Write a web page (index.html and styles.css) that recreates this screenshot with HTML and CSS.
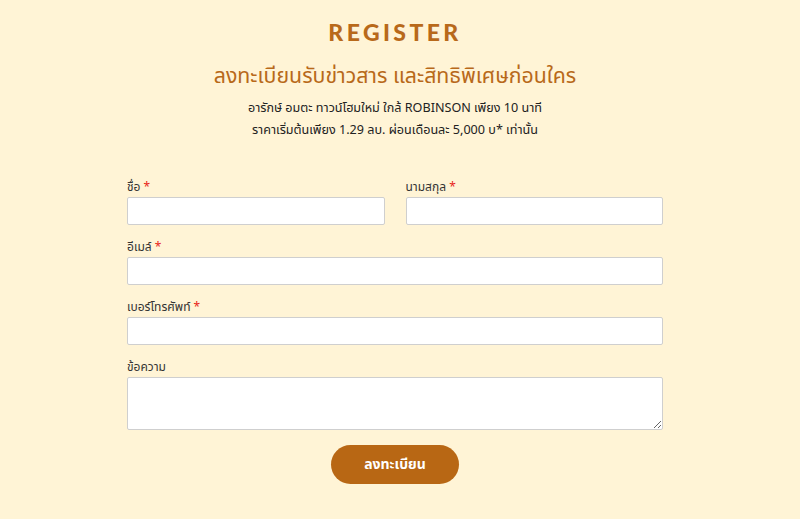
FILE: index.html
```html
<!DOCTYPE html>
<html lang="th">
<head>
<meta charset="utf-8">
<title>Register</title>
<link rel="stylesheet" href="styles.css">
</head>
<body>
<main class="page">
  <h1 class="title">REGISTER</h1>
  <h2 class="subtitle">ลงทะเบียนรับข่าวสาร และสิทธิพิเศษก่อนใคร</h2>
  <p class="desc">อารักษ์ อมตะ ทาวน์โฮมใหม่ ใกล้ ROBINSON เพียง 10 นาที<br>ราคาเริ่มต้นเพียง 1.29 ลบ. ผ่อนเดือนละ 5,000 บ* เท่านั้น</p>
  <form class="form">
    <div class="row two">
      <label class="field"><span class="lbl">ชื่อ <em>*</em></span><input type="text" class="inp"></label>
      <label class="field"><span class="lbl">นามสกุล <em>*</em></span><input type="text" class="inp"></label>
    </div>
    <label class="field"><span class="lbl">อีเมล์ <em>*</em></span><input type="email" class="inp"></label>
    <label class="field"><span class="lbl">เบอร์โทรศัพท์ <em>*</em></span><input type="tel" class="inp"></label>
    <label class="field"><span class="lbl">ข้อความ</span><textarea class="inp area"></textarea></label>
    <div class="actions"><button type="button" class="btn">ลงทะเบียน</button></div>
  </form>
</main>
</body>
</html>
```
FILE: styles.css
```css
html, body { margin: 0; padding: 0; }
body {
  background: #fff4d6;
  font-family: "Noto Sans", "Noto Sans Thai", "Open Sans", sans-serif;
  color: #222;
  width: 800px;
  height: 519px;
  overflow: hidden;
}
.page {
  display: flex;
  flex-direction: column;
  align-items: center;
  padding-top: 17px;
  padding-right: 10px;
}
.title {
  margin: 0;
  font-family: "Lato", "Open Sans", sans-serif;
  font-weight: 900;
  font-size: 23px;
  letter-spacing: 3.4px;
  line-height: 30px;
  color: #b8691a;
}
.subtitle {
  margin: 13px 0 0;
  font-weight: 400;
  font-size: 21.3px;
  line-height: 30px;
  color: #b8691a;
}
.desc {
  margin: 7px 0 0;
  text-align: center;
  font-size: 12.6px;
  line-height: 22px;
  color: #222;
}
.form {
  width: 536px;
  margin-top: 38px;
  display: flex;
  flex-direction: column;
  gap: 14px;
}
.row.two {
  display: grid;
  grid-template-columns: 1fr 1fr;
  column-gap: 21px;
}
.field { display: flex; flex-direction: column; }
.lbl {
  font-size: 12px;
  line-height: 16px;
  color: #333;
  margin-bottom: 2px;
}
.lbl em { font-style: normal; color: #e8241a; }
.inp {
  box-sizing: border-box;
  height: 28px;
  width: 100%;
  border: 1px solid #cfcfcf;
  border-radius: 2px;
  background: #fff;
  margin: 0;
  padding: 4px 8px;
  font: inherit;
}
.area { height: 53px; resize: vertical; }
.actions { display: flex; justify-content: center; margin-top: 1px; }
.btn {
  width: 128px;
  height: 39px;
  border: none;
  border-radius: 20px;
  background: #b86714;
  color: #fff;
  font-family: inherit;
  font-weight: 700;
  font-size: 14px;
}
```
